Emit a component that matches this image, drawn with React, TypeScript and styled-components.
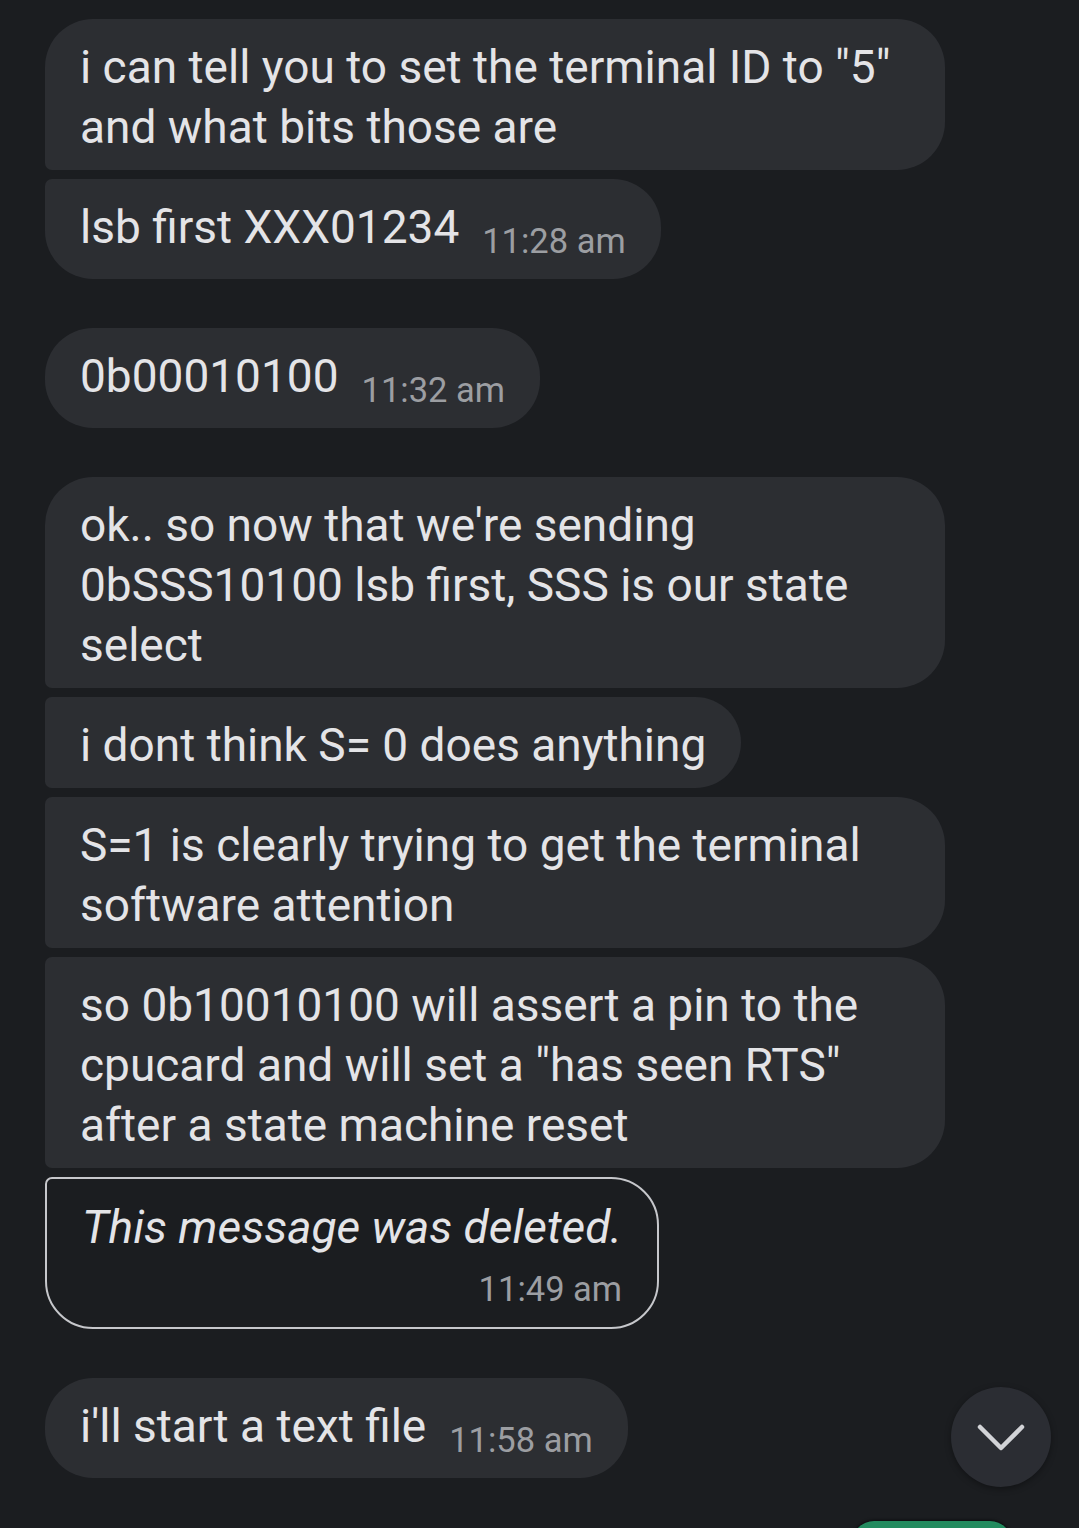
import styled, { createGlobalStyle } from "styled-components";

const GlobalStyle = createGlobalStyle`
  body{
    margin:0;
    background-color:#1b1d20;
    font-family:Roboto, "Noto Sans", sans-serif;
  }
`;

const Screen = styled.div`
  position:relative;
  width:1079px;
  height:1528px;
  overflow:hidden;
  background-color:#1b1d20;
`;
const Thread = styled.div`
  display:flex;
  flex-direction:column;
  gap:49px;
  padding:19px 0px 0px 45px;
`;
const Group = styled.div`
  display:flex;
  flex-direction:column;
  align-items:flex-start;
  gap:9px;
`;

type Pos = "first" | "middle" | "last" | "single";

const corners = (pos:Pos) => {
  const big = "48px";
  const small = "7px";
  const tl = pos==="first"||pos==="single" ? big : small;
  const bl = pos==="last"||pos==="single" ? big : small;
  return `${tl} ${big} ${big} ${bl}`;
};

const Bubble = styled.div<{$pos:Pos; $deleted?:boolean}>`
  box-sizing:border-box;
  max-width:900px;
  padding:18px 35px 13px 35px;
  border-radius:${(props)=>corners(props.$pos)};
  background-color:${(props)=>props.$deleted?"transparent":"#2c2e32"};
  border:${(props)=>props.$deleted?"2.5px solid #c6c7cb":"none"};
  display:flex;
  flex-direction:${(props)=>props.$deleted?"column":"row"};
  align-items:flex-end;
`;
const Text = styled.span<{$timed?:boolean; $italic?:boolean}>`
  align-self:flex-start;
  font-size:46px;
  line-height:60px;
  color:#e4e4e7;
  font-style:${(props)=>props.$italic?"italic":"normal"};
  margin-bottom:${(props)=>props.$timed?"9px":"0px"};
`;
const Time = styled.span<{$below?:boolean}>`
  flex-shrink:0;
  font-size:34.5px;
  line-height:40px;
  color:#9c9ea2;
  white-space:nowrap;
  margin-left:${(props)=>props.$below?"0px":"23px"};
  margin-top:${(props)=>props.$below?"3px":"0px"};
  margin-bottom:5px;
`;
const ScrollButton = styled.div`
  position:absolute;
  left:951px;
  top:1387px;
  width:100px;
  height:100px;
  border-radius:50%;
  background-color:#2b2d33;
  display:flex;
  align-items:center;
  justify-content:center;
  box-shadow:0px 2px 6px rgba(0,0,0,0.35);
`;
const ComposeFab = styled.div`
  position:absolute;
  left:852px;
  top:1521px;
  width:160px;
  height:80px;
  border-radius:22px;
  background-color:#238b5f;
  box-shadow:0px -1px 3px rgba(0,0,0,0.6);
`;

interface Message{
  text:string;
  time?:string;
  deleted?:boolean;
}

const groups:Message[][] = [
  [
    {text:'i can tell you to set the terminal ID to "5" and what bits those are'},
    {text:"lsb first XXX01234",time:"11:28 am"},
  ],
  [
    {text:"0b00010100",time:"11:32 am"},
  ],
  [
    {text:"ok.. so now that we're sending 0bSSS10100 lsb first, SSS is our state select"},
    {text:"i dont think S= 0 does anything"},
    {text:"S=1 is clearly trying to get the terminal software attention"},
    {text:'so 0b10010100 will assert a pin to the cpucard and will set a "has seen RTS" after a state machine reset'},
    {text:"This message was deleted.",time:"11:49 am",deleted:true},
  ],
  [
    {text:"i'll start a text file",time:"11:58 am"},
  ],
];

function position(i:number,len:number):Pos{
  if(len===1) return "single";
  if(i===0) return "first";
  if(i===len-1) return "last";
  return "middle";
}

function App(){
  return(
    <Screen>
      <GlobalStyle/>
      <Thread>
        {groups.map((group,g)=>(
          <Group key={g}>
            {group.map((msg,i)=>(
              <Bubble key={i} $pos={position(i,group.length)} $deleted={msg.deleted}>
                <Text $timed={!!msg.time} $italic={msg.deleted}>{msg.text}</Text>
                {msg.time && <Time $below={msg.deleted}>{msg.time}</Time>}
              </Bubble>
            ))}
          </Group>
        ))}
      </Thread>
      <ScrollButton>
        <svg width="50" height="30" viewBox="0 0 50 30">
          <polyline points="4,5 25,26 46,5" fill="none" stroke="#d2d3d7" strokeWidth="4.5" strokeLinecap="round" strokeLinejoin="round"/>
        </svg>
      </ScrollButton>
      <ComposeFab/>
    </Screen>
  )
}

export default App;
